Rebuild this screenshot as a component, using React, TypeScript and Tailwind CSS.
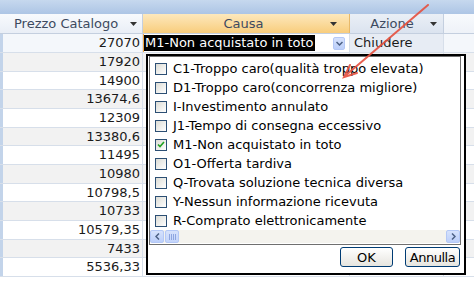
import React from 'react'

const prices = [
  '27070', '17920', '14900', '13674,6', '12309', '13380,6', '11495',
  '10980', '10798,5', '10733', '10579,35', '7433', '5536,33',
]

const causes = [
  { label: 'C1-Troppo caro(qualità troppo elevata)', checked: false },
  { label: 'D1-Troppo caro(concorrenza migliore)', checked: false },
  { label: 'I-Investimento annulato', checked: false },
  { label: 'J1-Tempo di consegna eccessivo', checked: false },
  { label: 'M1-Non acquistato in toto', checked: true },
  { label: 'O1-Offerta tardiva', checked: false },
  { label: 'Q-Trovata soluzione tecnica diversa', checked: false },
  { label: 'Y-Nessun informazione ricevuta', checked: false },
  { label: 'R-Comprato elettronicamente', checked: false },
]

function SortArrow() {
  return (
    <svg width="7" height="4" viewBox="0 0 7 4" className="shrink-0">
      <path d="M0 0h7L3.5 4z" fill="#333" />
    </svg>
  )
}

function CheckBox({ checked }: { checked: boolean }) {
  return (
    <span className="w-[12px] h-[12px] border border-[#2c4f74] bg-linear-to-br from-[#dcdcd5] to-white flex items-center justify-center shrink-0">
      {checked && (
        <svg width="8" height="7" viewBox="0 0 8 7">
          <path d="M1 3.5 3 5.5 7 1" stroke="#21a121" strokeWidth="1.6" fill="none" />
        </svg>
      )}
    </span>
  )
}

function ScrollBtn({ dir }: { dir: 'l' | 'r' }) {
  return (
    <span className="w-[14px] h-[13px] rounded-[2px] border border-[#b4c8f6] bg-linear-to-b from-[#d6e2fc] to-[#bccffa] flex items-center justify-center">
      <svg width="5" height="7" viewBox="0 0 5 7">
        <path d={dir === 'l' ? 'M4 0.5 1 3.5 4 6.5' : 'M1 0.5 4 3.5 1 6.5'} stroke="#4d6185" strokeWidth="1.5" fill="none" />
      </svg>
    </span>
  )
}

export default function App() {
  return (
    <div className="w-[474px] h-[284px] relative overflow-hidden bg-white font-['DejaVu_Sans',Verdana,sans-serif] text-[13px] text-[#1a1a1a]">
      <div className="h-[14px] bg-linear-to-b from-[#c6d8ee] to-[#adc5e5]" />

      {/* header */}
      <div className="flex h-[20px] border-b border-[#c4cfdf]">
        <div className="w-[143px] flex items-center pl-[14px] pr-[5px] bg-linear-to-b from-[#f8fafd] to-[#e9eef6] border-r border-[#c4cfdf] text-[#3d4a60]">
          <span className="flex-1">Prezzo Catalogo</span>
          <SortArrow />
        </div>
        <div className="w-[207px] flex items-center pr-[12px] bg-linear-to-b from-[#fde8bc] to-[#f8cd7c] border-r border-[#e8b969] text-[#3d4a60]">
          <span className="flex-1 text-center pl-[14px]">Causa</span>
          <SortArrow />
        </div>
        <div className="w-[94px] flex items-center pr-[6px] bg-linear-to-b from-[#eaeff6] to-[#dbe3ef] border-r border-[#c4cfdf] text-[#3d4a60]">
          <span className="flex-1 text-center pl-[4px]">Azione</span>
          <SortArrow />
        </div>
        <div className="flex-1 bg-linear-to-b from-[#f8fafd] to-[#eef2f8]" />
      </div>

      {/* rows */}
      {prices.map((p, i) => (
        <div
          key={i}
          className={`flex border-b border-[#d7dfea] ${i % 3 === 2 ? 'h-[18px]' : 'h-[19px]'} ${
            i === 0 ? 'bg-[#f4f7fb]' : i % 2 === 1 ? 'bg-[#f2f2f2]' : 'bg-white'
          }`}
        >
          <div className="w-[3px] bg-[#c3d4ea]" />
          <div className="w-[140px] flex items-center justify-end pr-[2px] border-r border-[#d7dfea]">{p}</div>
          {i === 0 ? (
            <>
              <div className="w-[207px] flex items-center border-l border-[#f0a640] border-r border-r-[#d7dfea] bg-white">
                <span className="bg-black text-white h-[16px] leading-[16px] pl-[1px] pr-[1px] whitespace-nowrap">M1-Non acquistato in toto</span>
                <span className="ml-auto mr-[4px] w-[12px] h-[13px] rounded-[2px] border border-[#b4c8f6] bg-linear-to-b from-[#d6e2fc] to-[#bccffa] flex items-center justify-center">
                  <svg width="7" height="5" viewBox="0 0 7 5">
                    <path d="M0.5 1 3.5 4 6.5 1" stroke="#4d6185" strokeWidth="1.5" fill="none" />
                  </svg>
                </span>
              </div>
              <div className="w-[94px] flex items-center pl-[4px] bg-[#e7ecf4] border-r border-[#d7dfea]">Chiudere</div>
            </>
          ) : (
            <>
              <div className="w-[207px] border-r border-[#d7dfea]" />
              <div className="w-[94px] border-r border-[#d7dfea]" />
            </>
          )}
          <div className="flex-1" />
        </div>
      ))}

      {/* dropdown popup */}
      <div className="absolute left-[146px] top-[54px] w-[320px] h-[221px] border-2 border-black bg-white flex flex-col">
        <div className="ml-px w-[312px] h-[189px] border border-[#6f6f6f] flex flex-col">
          <div className="pt-[2px] pl-[5px] flex-1">
            {causes.map((c) => (
              <div key={c.label} className="h-[19px] flex items-center gap-[6px] text-black whitespace-nowrap">
                <CheckBox checked={c.checked} />
                <span>{c.label}</span>
              </div>
            ))}
          </div>
          <div className="h-[13px] flex items-center bg-[#f4f3ee] mb-px">
            <ScrollBtn dir="l" />
            <span className="ml-[1px] w-[14px] h-[13px] rounded-[2px] border border-[#b4c8f6] bg-linear-to-b from-[#d6e2fc] to-[#c4d5fb] flex items-center justify-center gap-px">
              <span className="w-px h-[6px] bg-[#8ea6e0]" />
              <span className="w-px h-[6px] bg-[#8ea6e0]" />
              <span className="w-px h-[6px] bg-[#8ea6e0]" />
              <span className="w-px h-[6px] bg-[#8ea6e0]" />
            </span>
            <span className="flex-1" />
            <ScrollBtn dir="r" />
          </div>
        </div>
        <div className="mt-[2px] flex justify-end gap-[12px] pr-[4px]">
          <button className="w-[53px] h-[20px] rounded-[3px] border border-[#003c74] bg-linear-to-b from-white to-[#e6e5df] text-black leading-none">OK</button>
          <button className="w-[55px] h-[20px] rounded-[3px] border border-[#003c74] bg-linear-to-b from-white to-[#e6e5df] text-black leading-none tracking-[-0.5px]">Annulla</button>
        </div>
      </div>

      {/* annotation arrow */}
      <svg className="absolute inset-0 pointer-events-none" width="474" height="284" viewBox="0 0 474 284">
        <g stroke="#e6503f" strokeWidth="2" fill="none" strokeLinecap="round" opacity="0.9">
          <path d="M428 5 345 76" />
          <path d="M357 73 344 77 350 65" />
        </g>
      </svg>
    </div>
  )
}
